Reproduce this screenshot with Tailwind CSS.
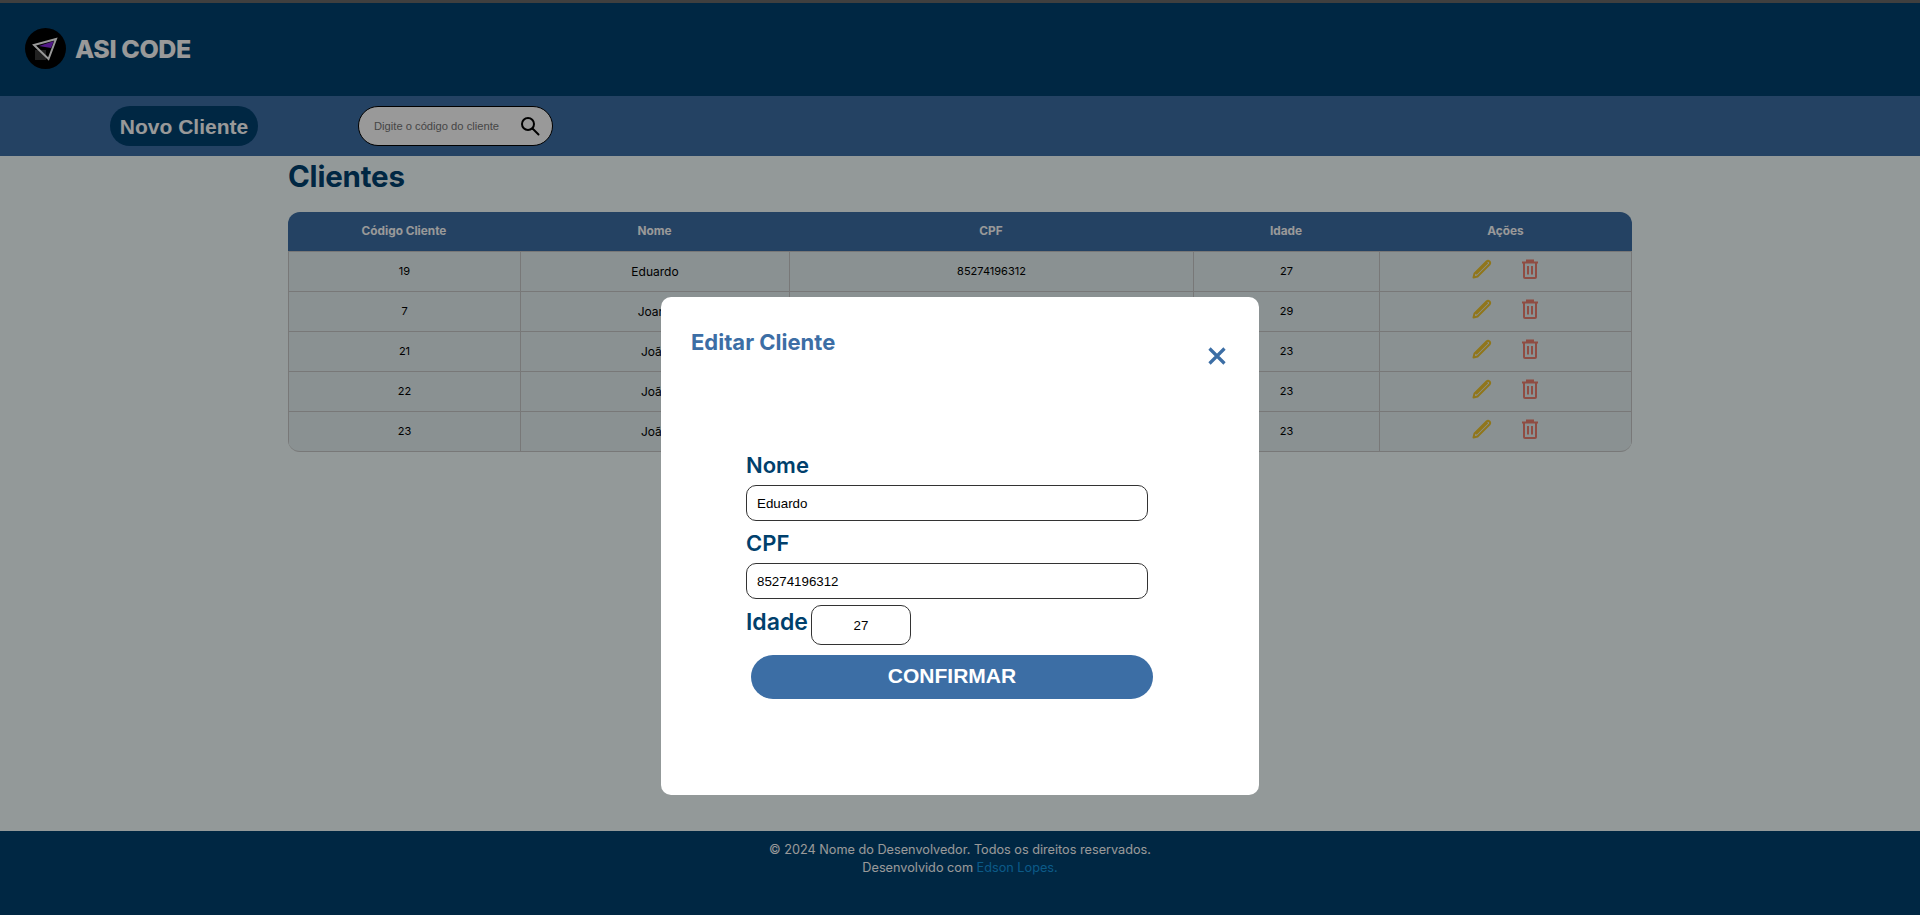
<!DOCTYPE html>
<html lang="pt-BR">
<head>
<meta charset="utf-8">
<title>Clientes</title>
<script src="https://cdn.jsdelivr.net/npm/@tailwindcss/browser@4"></script>
</head>
<body class="h-[915px] overflow-hidden bg-[#f5ffff] font-['Inter',sans-serif]">
<div class="relative flex h-[915px] flex-col">
  <div class="h-[3px] bg-[#3f3f3f]"></div>
  <header class="flex h-[93px] items-start bg-[#004170] pl-[25px] pt-[25px]">
    <svg class="h-[41px] w-[41px]" viewBox="0 0 41 41">
      <circle cx="20.5" cy="20.5" r="20.5" fill="#000"/>
      <rect x="10" y="22" width="11" height="10" fill="#3a3a3a"/>
      <polygon points="14,18 29,13 26,20" fill="#8a2be2"/>
      <polygon points="9,17 31,11 23.5,31" fill="none" stroke="#fff" stroke-width="2"/>
    </svg>
    <span class="ml-[9px] mt-[6px] text-[25px] font-extrabold leading-[30px] tracking-[-0.4px] text-white">ASI CODE</span>
  </header>
  <nav class="flex h-[60px] items-start bg-[#3c6ea5] pl-[110px] pt-[10px]">
    <button class="h-[40px] w-[148px] rounded-[20px] bg-[#004170] pt-[2px] font-['Liberation_Sans',sans-serif] text-[21px] font-bold text-white">Novo Cliente</button>
    <div class="ml-[100px] flex h-[40px] w-[195px] items-center rounded-[20px] border border-black bg-white pl-[15px]">
      <input class="w-[140px] bg-transparent font-['Liberation_Sans',sans-serif] text-[11.2px] outline-none placeholder:text-[#757575]" placeholder="Digite o código do cliente">
      <svg class="ml-[6px] h-[20px] w-[20px]" viewBox="0 0 20 20" fill="none" stroke="#000" stroke-width="2">
        <circle cx="8" cy="8" r="6"/>
        <path d="M12.5 12.5 L18.5 18.5" stroke-linecap="round"/>
      </svg>
    </div>
  </nav>
  <main class="flex-1">
    <div class="mx-auto w-[1344px]">
      <h1 class="mt-[2px] h-[54px] text-[29.5px] font-bold leading-[36px] tracking-[-0.2px] text-[#004170]">Clientes</h1>
      <div class="overflow-hidden rounded-[12px] border-b border-[#c8c8c8] bg-[#e6f2f3]">
        <table class="w-full table-fixed border-separate border-spacing-0 text-center text-[11px] text-black">
          <thead>
            <tr class="h-[39px] bg-[#3c6ea5] text-[11.8px] font-bold text-white">
              <th class="w-[232px] font-bold">Código Cliente</th>
              <th class="w-[269px] font-bold">Nome</th>
              <th class="w-[404px] font-bold">CPF</th>
              <th class="w-[186px] font-bold">Idade</th>
              <th class="font-bold">Ações</th>
            </tr>
          </thead>
          <tbody>
            <tr class="h-[40px]">
              <td class="border-l border-t border-[#c8c8c8]">19</td>
              <td class="border-l border-t border-[#c8c8c8] text-[12px]">Eduardo</td>
              <td class="border-l border-t border-[#c8c8c8]">85274196312</td>
              <td class="border-l border-t border-[#c8c8c8]">27</td>
              <td class="border-x border-t border-[#c8c8c8]">
                <div class="flex items-start justify-center gap-[29px] pb-[6px] pr-[1px]">
                  <svg class="h-[20px] w-[20px]" viewBox="0 0 20 20"><path d="M1.5 18.5 L2.5 14.5 L14.5 2.5 Q16 1.2 17.5 2.5 Q18.8 4 17.5 5.5 L5.5 17.5 Z M4 15 L15.5 3.5" fill="none" stroke="#f0c52d" stroke-width="2" stroke-linejoin="round"/></svg>
                  <svg class="h-[20px] w-[18px]" viewBox="0 0 18 20" fill="none" stroke="#ef7f6f" stroke-width="2"><path d="M1 3.5 H17 M6 3.5 V1.5 H12 V3.5 M3 3.5 V18 Q3 19 4 19 H14 Q15 19 15 18 V3.5 M7 7 V15.5 M11 7 V15.5"/></svg>
                </div>
              </td>
            </tr>
            <tr class="h-[40px]">
              <td class="border-l border-t border-[#c8c8c8]">7</td>
              <td class="border-l border-t border-[#c8c8c8] text-[12px]">Joana</td>
              <td class="border-l border-t border-[#c8c8c8]">12345678900</td>
              <td class="border-l border-t border-[#c8c8c8]">29</td>
              <td class="border-x border-t border-[#c8c8c8]">
                <div class="flex items-start justify-center gap-[29px] pb-[6px] pr-[1px]">
                  <svg class="h-[20px] w-[20px]" viewBox="0 0 20 20"><path d="M1.5 18.5 L2.5 14.5 L14.5 2.5 Q16 1.2 17.5 2.5 Q18.8 4 17.5 5.5 L5.5 17.5 Z M4 15 L15.5 3.5" fill="none" stroke="#f0c52d" stroke-width="2" stroke-linejoin="round"/></svg>
                  <svg class="h-[20px] w-[18px]" viewBox="0 0 18 20" fill="none" stroke="#ef7f6f" stroke-width="2"><path d="M1 3.5 H17 M6 3.5 V1.5 H12 V3.5 M3 3.5 V18 Q3 19 4 19 H14 Q15 19 15 18 V3.5 M7 7 V15.5 M11 7 V15.5"/></svg>
                </div>
              </td>
            </tr>
            <tr class="h-[40px]">
              <td class="border-l border-t border-[#c8c8c8]">21</td>
              <td class="border-l border-t border-[#c8c8c8] text-[12px]">João</td>
              <td class="border-l border-t border-[#c8c8c8]">12345678900</td>
              <td class="border-l border-t border-[#c8c8c8]">23</td>
              <td class="border-x border-t border-[#c8c8c8]">
                <div class="flex items-start justify-center gap-[29px] pb-[6px] pr-[1px]">
                  <svg class="h-[20px] w-[20px]" viewBox="0 0 20 20"><path d="M1.5 18.5 L2.5 14.5 L14.5 2.5 Q16 1.2 17.5 2.5 Q18.8 4 17.5 5.5 L5.5 17.5 Z M4 15 L15.5 3.5" fill="none" stroke="#f0c52d" stroke-width="2" stroke-linejoin="round"/></svg>
                  <svg class="h-[20px] w-[18px]" viewBox="0 0 18 20" fill="none" stroke="#ef7f6f" stroke-width="2"><path d="M1 3.5 H17 M6 3.5 V1.5 H12 V3.5 M3 3.5 V18 Q3 19 4 19 H14 Q15 19 15 18 V3.5 M7 7 V15.5 M11 7 V15.5"/></svg>
                </div>
              </td>
            </tr>
            <tr class="h-[40px]">
              <td class="border-l border-t border-[#c8c8c8]">22</td>
              <td class="border-l border-t border-[#c8c8c8] text-[12px]">João</td>
              <td class="border-l border-t border-[#c8c8c8]">12345678900</td>
              <td class="border-l border-t border-[#c8c8c8]">23</td>
              <td class="border-x border-t border-[#c8c8c8]">
                <div class="flex items-start justify-center gap-[29px] pb-[6px] pr-[1px]">
                  <svg class="h-[20px] w-[20px]" viewBox="0 0 20 20"><path d="M1.5 18.5 L2.5 14.5 L14.5 2.5 Q16 1.2 17.5 2.5 Q18.8 4 17.5 5.5 L5.5 17.5 Z M4 15 L15.5 3.5" fill="none" stroke="#f0c52d" stroke-width="2" stroke-linejoin="round"/></svg>
                  <svg class="h-[20px] w-[18px]" viewBox="0 0 18 20" fill="none" stroke="#ef7f6f" stroke-width="2"><path d="M1 3.5 H17 M6 3.5 V1.5 H12 V3.5 M3 3.5 V18 Q3 19 4 19 H14 Q15 19 15 18 V3.5 M7 7 V15.5 M11 7 V15.5"/></svg>
                </div>
              </td>
            </tr>
            <tr class="h-[40px]">
              <td class="border-l border-t border-[#c8c8c8]">23</td>
              <td class="border-l border-t border-[#c8c8c8] text-[12px]">João</td>
              <td class="border-l border-t border-[#c8c8c8]">12345678900</td>
              <td class="border-l border-t border-[#c8c8c8]">23</td>
              <td class="border-x border-t border-[#c8c8c8]">
                <div class="flex items-start justify-center gap-[29px] pb-[6px] pr-[1px]">
                  <svg class="h-[20px] w-[20px]" viewBox="0 0 20 20"><path d="M1.5 18.5 L2.5 14.5 L14.5 2.5 Q16 1.2 17.5 2.5 Q18.8 4 17.5 5.5 L5.5 17.5 Z M4 15 L15.5 3.5" fill="none" stroke="#f0c52d" stroke-width="2" stroke-linejoin="round"/></svg>
                  <svg class="h-[20px] w-[18px]" viewBox="0 0 18 20" fill="none" stroke="#ef7f6f" stroke-width="2"><path d="M1 3.5 H17 M6 3.5 V1.5 H12 V3.5 M3 3.5 V18 Q3 19 4 19 H14 Q15 19 15 18 V3.5 M7 7 V15.5 M11 7 V15.5"/></svg>
                </div>
              </td>
            </tr>
          </tbody>
        </table>
      </div>
    </div>
  </main>
  <footer class="h-[84px] bg-[#004170] pt-[10px] text-center text-[12.7px] leading-[18px] text-white">
    <p>© 2024 Nome do Desenvolvedor. Todos os direitos reservados.</p>
    <p>Desenvolvido com <a class="text-[#1497e0]">Edson Lopes.</a></p>
  </footer>

  <div class="absolute inset-x-0 bottom-0 top-[3px] flex items-start justify-center bg-black/40 pt-[294px]">
    <div class="relative h-[498px] w-[598px] rounded-[10px] bg-white">
      <h2 class="absolute left-[30px] top-[31px] text-[22px] font-bold leading-[28px] text-[#3c6ea5]">Editar Cliente</h2>
      <svg class="absolute left-[547px] top-[50px] h-[18px] w-[18px]" viewBox="0 0 18 18" fill="none" stroke="#3c6ea5" stroke-width="3.2"><path d="M1.5 1.5 L16.5 16.5 M16.5 1.5 L1.5 16.5"/></svg>
      <form class="absolute left-[85px] top-[153px] flex w-[412px] flex-col items-start">
        <label class="h-[35px] text-[22px] font-semibold leading-[30px] text-[#00406c]">Nome</label>
        <input value="Eduardo" class="h-[36px] w-[402px] rounded-[10px] border border-[#333] px-[10px] font-['Liberation_Sans',sans-serif] text-[13.33px] text-black outline-none">
        <label class="mt-[7px] h-[35px] text-[22px] font-semibold leading-[30px] text-[#00406c]">CPF</label>
        <input value="85274196312" class="h-[36px] w-[402px] rounded-[10px] border border-[#333] px-[10px] font-['Liberation_Sans',sans-serif] text-[13.33px] text-black outline-none">
        <div class="mt-[6px] flex items-start">
          <label class="w-[65px] pt-[2px] text-[23px] font-semibold leading-[30px] text-[#00406c]">Idade</label>
          <input value="27" class="h-[40px] w-[100px] rounded-[10px] border border-[#333] text-center font-['Liberation_Sans',sans-serif] text-[13.33px] text-black outline-none">
        </div>
        <button type="button" class="ml-[5px] mt-[10px] h-[44px] w-[402px] rounded-[22px] bg-[#3c6ea5] pb-[2px] font-['Liberation_Sans',sans-serif] text-[21px] font-bold text-white">CONFIRMAR</button>
      </form>
    </div>
  </div>
</div>
</body>
</html>
